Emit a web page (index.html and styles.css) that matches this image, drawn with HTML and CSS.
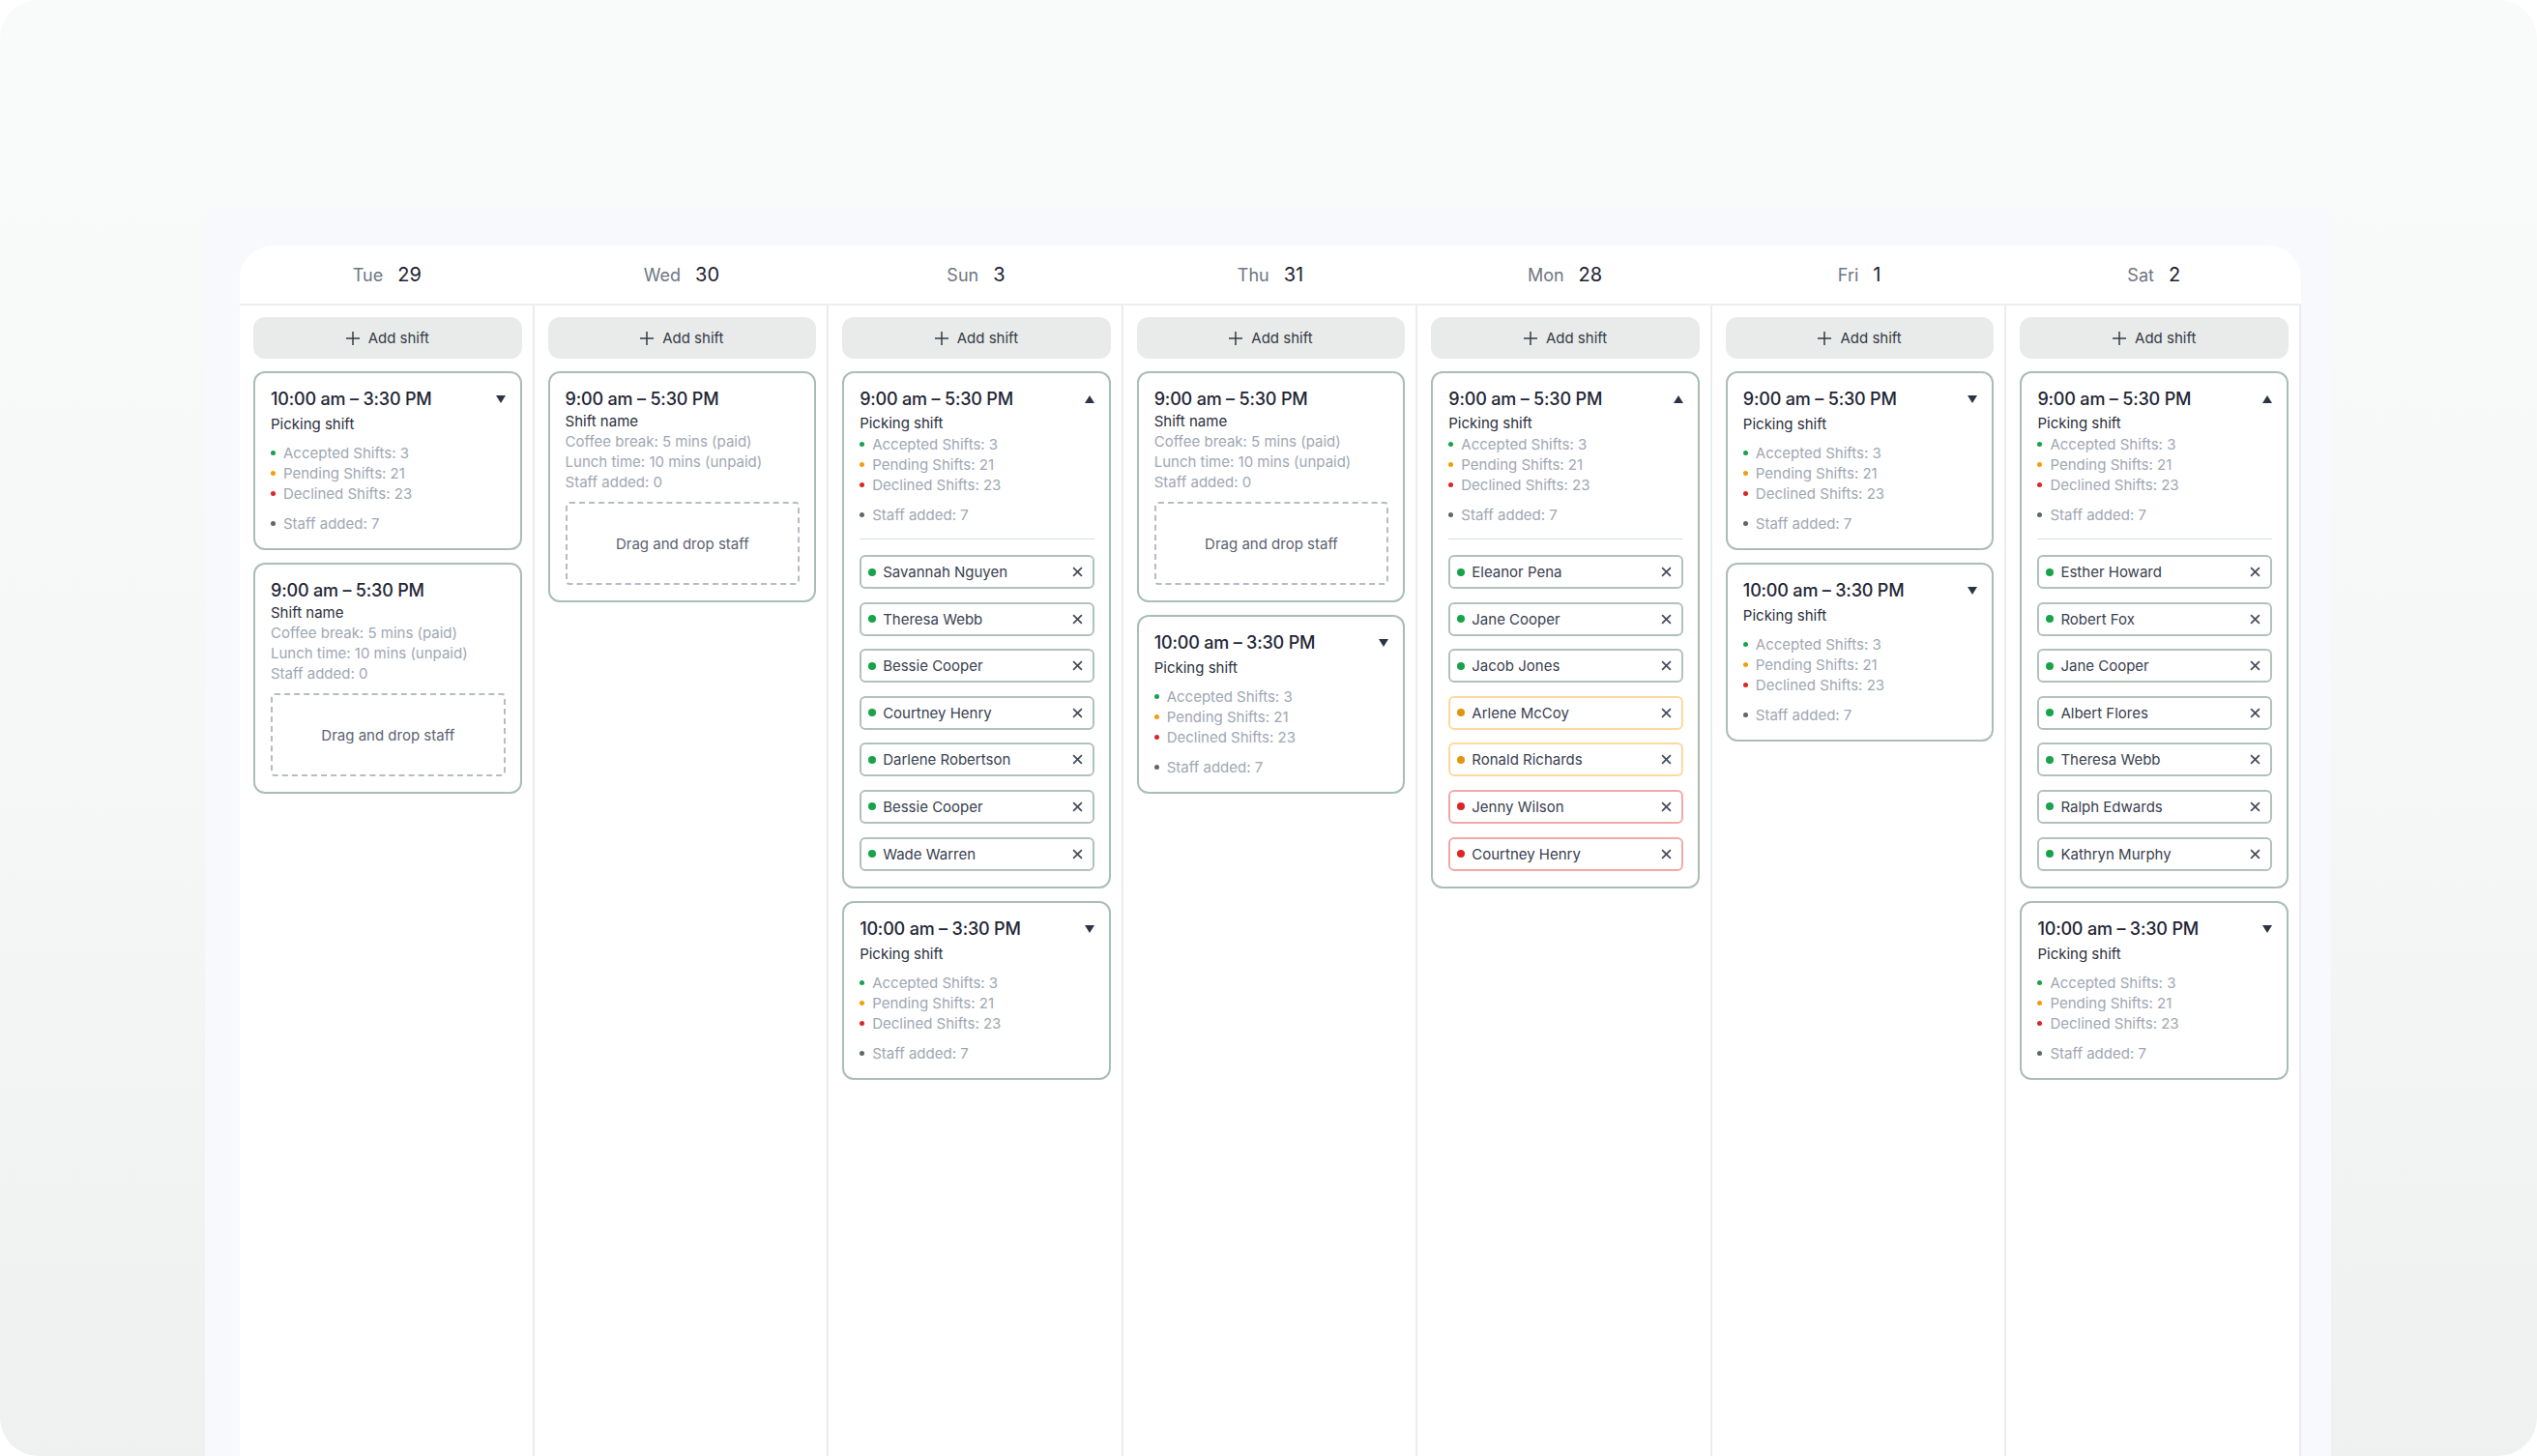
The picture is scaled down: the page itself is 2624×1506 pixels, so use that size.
FILE: index.html
```html
<!DOCTYPE html>
<html lang="en">
<head>
    <meta charset="UTF-8">
    <title>Week shifts</title>
    <link rel="stylesheet" href="styles.css">
</head>
<body>
<div class="frame">
<div class="panel">
<div class="calendar">

    <div class="days">
        <div class="day"><span class="dname">Tue</span><span class="dnum">29</span></div>
        <div class="day"><span class="dname">Wed</span><span class="dnum">30</span></div>
        <div class="day"><span class="dname">Sun</span><span class="dnum">3</span></div>
        <div class="day"><span class="dname">Thu</span><span class="dnum">31</span></div>
        <div class="day"><span class="dname">Mon</span><span class="dnum">28</span></div>
        <div class="day"><span class="dname">Fri</span><span class="dnum">1</span></div>
        <div class="day"><span class="dname">Sat</span><span class="dnum">2</span></div>
    </div>

    <div class="cols">

        <!-- Tue -->
        <div class="col">
            <button class="add"><svg viewBox="0 0 14 14"><path d="M7 0v14M0 7h14"/></svg>Add shift</button>
            <div class="shift">
                <div class="head"><span class="time">10:00 am – 3:30 PM</span><i class="caret down"></i></div>
                <div class="name">Picking shift</div>
                <ul class="stats">
                    <li class="ok">Accepted Shifts: 3</li>
                    <li class="wait">Pending Shifts: 21</li>
                    <li class="no">Declined Shifts: 23</li>
                    <li class="added">Staff added: 7</li>
                </ul>
            </div>
            <div class="shift empty">
                <div class="head"><span class="time">9:00 am – 5:30 PM</span></div>
                <div class="name">Shift name</div>
                <ul class="notes">
                    <li>Coffee break: 5 mins (paid)</li>
                    <li>Lunch time: 10 mins (unpaid)</li>
                    <li>Staff added: 0</li>
                </ul>
                <div class="drop">Drag and drop staff</div>
            </div>
        </div>

        <!-- Wed -->
        <div class="col">
            <button class="add"><svg viewBox="0 0 14 14"><path d="M7 0v14M0 7h14"/></svg>Add shift</button>
            <div class="shift empty">
                <div class="head"><span class="time">9:00 am – 5:30 PM</span></div>
                <div class="name">Shift name</div>
                <ul class="notes">
                    <li>Coffee break: 5 mins (paid)</li>
                    <li>Lunch time: 10 mins (unpaid)</li>
                    <li>Staff added: 0</li>
                </ul>
                <div class="drop">Drag and drop staff</div>
            </div>
        </div>

        <!-- Sun -->
        <div class="col">
            <button class="add"><svg viewBox="0 0 14 14"><path d="M7 0v14M0 7h14"/></svg>Add shift</button>
            <div class="shift open">
                <div class="head"><span class="time">9:00 am – 5:30 PM</span><i class="caret up"></i></div>
                <div class="name">Picking shift</div>
                <ul class="stats">
                    <li class="ok">Accepted Shifts: 3</li>
                    <li class="wait">Pending Shifts: 21</li>
                    <li class="no">Declined Shifts: 23</li>
                    <li class="added">Staff added: 7</li>
                </ul>
                <div class="sep"></div>
                <ul class="staff">
                    <li class="ok"><em></em><span>Savannah Nguyen</span><svg viewBox="0 0 10 10"><path d="M1 1l8 8M9 1l-8 8"/></svg></li>
                    <li class="ok"><em></em><span>Theresa Webb</span><svg viewBox="0 0 10 10"><path d="M1 1l8 8M9 1l-8 8"/></svg></li>
                    <li class="ok"><em></em><span>Bessie Cooper</span><svg viewBox="0 0 10 10"><path d="M1 1l8 8M9 1l-8 8"/></svg></li>
                    <li class="ok"><em></em><span>Courtney Henry</span><svg viewBox="0 0 10 10"><path d="M1 1l8 8M9 1l-8 8"/></svg></li>
                    <li class="ok"><em></em><span>Darlene Robertson</span><svg viewBox="0 0 10 10"><path d="M1 1l8 8M9 1l-8 8"/></svg></li>
                    <li class="ok"><em></em><span>Bessie Cooper</span><svg viewBox="0 0 10 10"><path d="M1 1l8 8M9 1l-8 8"/></svg></li>
                    <li class="ok"><em></em><span>Wade Warren</span><svg viewBox="0 0 10 10"><path d="M1 1l8 8M9 1l-8 8"/></svg></li>
                </ul>
            </div>
            <div class="shift">
                <div class="head"><span class="time">10:00 am – 3:30 PM</span><i class="caret down"></i></div>
                <div class="name">Picking shift</div>
                <ul class="stats">
                    <li class="ok">Accepted Shifts: 3</li>
                    <li class="wait">Pending Shifts: 21</li>
                    <li class="no">Declined Shifts: 23</li>
                    <li class="added">Staff added: 7</li>
                </ul>
            </div>
        </div>

        <!-- Thu -->
        <div class="col">
            <button class="add"><svg viewBox="0 0 14 14"><path d="M7 0v14M0 7h14"/></svg>Add shift</button>
            <div class="shift empty">
                <div class="head"><span class="time">9:00 am – 5:30 PM</span></div>
                <div class="name">Shift name</div>
                <ul class="notes">
                    <li>Coffee break: 5 mins (paid)</li>
                    <li>Lunch time: 10 mins (unpaid)</li>
                    <li>Staff added: 0</li>
                </ul>
                <div class="drop">Drag and drop staff</div>
            </div>
            <div class="shift">
                <div class="head"><span class="time">10:00 am – 3:30 PM</span><i class="caret down"></i></div>
                <div class="name">Picking shift</div>
                <ul class="stats">
                    <li class="ok">Accepted Shifts: 3</li>
                    <li class="wait">Pending Shifts: 21</li>
                    <li class="no">Declined Shifts: 23</li>
                    <li class="added">Staff added: 7</li>
                </ul>
            </div>
        </div>

        <!-- Mon -->
        <div class="col">
            <button class="add"><svg viewBox="0 0 14 14"><path d="M7 0v14M0 7h14"/></svg>Add shift</button>
            <div class="shift open">
                <div class="head"><span class="time">9:00 am – 5:30 PM</span><i class="caret up"></i></div>
                <div class="name">Picking shift</div>
                <ul class="stats">
                    <li class="ok">Accepted Shifts: 3</li>
                    <li class="wait">Pending Shifts: 21</li>
                    <li class="no">Declined Shifts: 23</li>
                    <li class="added">Staff added: 7</li>
                </ul>
                <div class="sep"></div>
                <ul class="staff">
                    <li class="ok"><em></em><span>Eleanor Pena</span><svg viewBox="0 0 10 10"><path d="M1 1l8 8M9 1l-8 8"/></svg></li>
                    <li class="ok"><em></em><span>Jane Cooper</span><svg viewBox="0 0 10 10"><path d="M1 1l8 8M9 1l-8 8"/></svg></li>
                    <li class="ok"><em></em><span>Jacob Jones</span><svg viewBox="0 0 10 10"><path d="M1 1l8 8M9 1l-8 8"/></svg></li>
                    <li class="wait"><em></em><span>Arlene McCoy</span><svg viewBox="0 0 10 10"><path d="M1 1l8 8M9 1l-8 8"/></svg></li>
                    <li class="wait"><em></em><span>Ronald Richards</span><svg viewBox="0 0 10 10"><path d="M1 1l8 8M9 1l-8 8"/></svg></li>
                    <li class="no"><em></em><span>Jenny Wilson</span><svg viewBox="0 0 10 10"><path d="M1 1l8 8M9 1l-8 8"/></svg></li>
                    <li class="no"><em></em><span>Courtney Henry</span><svg viewBox="0 0 10 10"><path d="M1 1l8 8M9 1l-8 8"/></svg></li>
                </ul>
            </div>
        </div>

        <!-- Fri -->
        <div class="col">
            <button class="add"><svg viewBox="0 0 14 14"><path d="M7 0v14M0 7h14"/></svg>Add shift</button>
            <div class="shift">
                <div class="head"><span class="time">9:00 am – 5:30 PM</span><i class="caret down"></i></div>
                <div class="name">Picking shift</div>
                <ul class="stats">
                    <li class="ok">Accepted Shifts: 3</li>
                    <li class="wait">Pending Shifts: 21</li>
                    <li class="no">Declined Shifts: 23</li>
                    <li class="added">Staff added: 7</li>
                </ul>
            </div>
            <div class="shift">
                <div class="head"><span class="time">10:00 am – 3:30 PM</span><i class="caret down"></i></div>
                <div class="name">Picking shift</div>
                <ul class="stats">
                    <li class="ok">Accepted Shifts: 3</li>
                    <li class="wait">Pending Shifts: 21</li>
                    <li class="no">Declined Shifts: 23</li>
                    <li class="added">Staff added: 7</li>
                </ul>
            </div>
        </div>

        <!-- Sat -->
        <div class="col">
            <button class="add"><svg viewBox="0 0 14 14"><path d="M7 0v14M0 7h14"/></svg>Add shift</button>
            <div class="shift open">
                <div class="head"><span class="time">9:00 am – 5:30 PM</span><i class="caret up"></i></div>
                <div class="name">Picking shift</div>
                <ul class="stats">
                    <li class="ok">Accepted Shifts: 3</li>
                    <li class="wait">Pending Shifts: 21</li>
                    <li class="no">Declined Shifts: 23</li>
                    <li class="added">Staff added: 7</li>
                </ul>
                <div class="sep"></div>
                <ul class="staff">
                    <li class="ok"><em></em><span>Esther Howard</span><svg viewBox="0 0 10 10"><path d="M1 1l8 8M9 1l-8 8"/></svg></li>
                    <li class="ok"><em></em><span>Robert Fox</span><svg viewBox="0 0 10 10"><path d="M1 1l8 8M9 1l-8 8"/></svg></li>
                    <li class="ok"><em></em><span>Jane Cooper</span><svg viewBox="0 0 10 10"><path d="M1 1l8 8M9 1l-8 8"/></svg></li>
                    <li class="ok"><em></em><span>Albert Flores</span><svg viewBox="0 0 10 10"><path d="M1 1l8 8M9 1l-8 8"/></svg></li>
                    <li class="ok"><em></em><span>Theresa Webb</span><svg viewBox="0 0 10 10"><path d="M1 1l8 8M9 1l-8 8"/></svg></li>
                    <li class="ok"><em></em><span>Ralph Edwards</span><svg viewBox="0 0 10 10"><path d="M1 1l8 8M9 1l-8 8"/></svg></li>
                    <li class="ok"><em></em><span>Kathryn Murphy</span><svg viewBox="0 0 10 10"><path d="M1 1l8 8M9 1l-8 8"/></svg></li>
                </ul>
            </div>
            <div class="shift">
                <div class="head"><span class="time">10:00 am – 3:30 PM</span><i class="caret down"></i></div>
                <div class="name">Picking shift</div>
                <ul class="stats">
                    <li class="ok">Accepted Shifts: 3</li>
                    <li class="wait">Pending Shifts: 21</li>
                    <li class="no">Declined Shifts: 23</li>
                    <li class="added">Staff added: 7</li>
                </ul>
            </div>
        </div>

    </div>
</div>
</div>
</div>
</body>
</html>
```

FILE: styles.css
```css
* {
    margin: 0;
    padding: 0;
    list-style: none;
    box-sizing: border-box;
}
body {
    width: 2624px;
    height: 1506px;
    overflow: hidden;
    background: #fff;
    font-family: Inter, "Noto Sans", sans-serif;
    color: #2b313c;
}

/* outer frame + tinted panel behind the calendar */
.frame {
    height: 100%;
    border-radius: 40px;
    overflow: hidden;
    padding: 217px 0 0 212px;
    background: linear-gradient(to bottom, #f9fafa 0%, #f6f7f7 50%, #eef1f0 100%);
}
.panel {
    width: 2199px;
    height: 100%;
    padding: 37px 0 0 36px;
    background: #f8f9fc;
}
.calendar {
    width: 2132px;
    height: 100%;
    background: #fff;
    border-radius: 34px 34px 0 0;
    display: flex;
    flex-direction: column;
}

/* day header */
.days {
    display: grid;
    grid-template-columns: repeat(7, 1fr);
    height: 62px;
    border-bottom: 2px solid #eceef2;
}
.day {
    display: flex;
    justify-content: center;
    align-items: center;
    gap: 15px;
}
.dname {
    font-size: 18px;
    color: #6f7684;
}
.dnum {
    font-size: 20px;
    color: #1c2230;
}

/* day columns */
.cols {
    flex: 1;
    display: grid;
    grid-template-columns: repeat(7, 1fr);
}
.col {
    border-right: 2px solid #ececf0;
    padding: 12px 11px 0 14px;
    display: flex;
    flex-direction: column;
    gap: 13px;
}

.add {
    height: 43px;
    border: none;
    border-radius: 12px;
    background: #e8ebea;
    font: 15px Inter, "Noto Sans", sans-serif;
    color: #353b45;
    display: flex;
    justify-content: center;
    align-items: center;
    gap: 9px;
}
.add svg {
    width: 14px;
    height: 14px;
    stroke: #353b45;
    stroke-width: 1.5;
}

/* shift card */
.shift {
    border: 2px solid #abbeb6;
    border-radius: 12px;
    padding: 15px 15px 15px 16px;
}
.shift.open,
.shift.empty {
    padding-bottom: 16px;
}
.head {
    height: 24px;
    display: flex;
    justify-content: space-between;
    align-items: center;
}
.time {
    font-size: 18px;
    line-height: 24px;
    font-weight: 500;
    color: #1f2636;
    letter-spacing: -0.01em;
}
.caret {
    width: 0;
    height: 0;
    border-left: 5.5px solid transparent;
    border-right: 5.5px solid transparent;
}
.caret.down {
    border-top: 8px solid #2b3445;
}
.caret.up {
    border-bottom: 8px solid #2b3445;
}
.name {
    font-size: 15px;
    line-height: 21px;
    margin-top: 3px;
    color: #2b313c;
}
.open .name {
    margin-top: 2px;
}
.empty .name {
    margin-top: 0;
}

.stats {
    margin-top: 9px;
}
.open .stats {
    margin-top: 1px;
}
.stats li,
.notes li {
    font-size: 15px;
    line-height: 21px;
    color: #a0a7b3;
}
.stats li {
    display: flex;
    align-items: center;
}
.stats li:before {
    content: "";
    width: 5px;
    height: 5px;
    border-radius: 50%;
    margin-right: 8px;
    background: #5d6863;
}
.stats li.ok:before { background: #17a34a; }
.stats li.wait:before { background: #f59e0b; }
.stats li.no:before { background: #dc2626; }
.stats li.added {
    margin-top: 10px;
}

.sep {
    height: 1px;
    background: #d9dfe1;
    margin: 14px 0 16px;
}

/* staff chips inside an open shift */
.staff li {
    height: 35px;
    border: 2px solid #b0c2ba;
    border-radius: 6px;
    padding: 0 10px 0 7px;
    display: flex;
    align-items: center;
    font-size: 15px;
    color: #3a4150;
}
.staff li + li {
    margin-top: 13.6px;
}
.staff em {
    width: 8px;
    height: 8px;
    border-radius: 50%;
    margin-right: 7px;
    background: #17a34a;
}
.staff span {
    flex: 1;
}
.staff svg {
    width: 11px;
    height: 11px;
    stroke: #474e5b;
    stroke-width: 1.6;
}
.staff li.wait { border-color: #fcd99c; }
.staff li.wait em { background: #e2950f; }
.staff li.no { border-color: #f3a8a8; }
.staff li.no em { background: #dc2626; }

.drop {
    margin-top: 10px;
    height: 86px;
    border: 2px dashed #b6bcc3;
    border-radius: 4px;
    display: flex;
    justify-content: center;
    align-items: center;
    font-size: 15px;
    color: #5c6371;
}
```
